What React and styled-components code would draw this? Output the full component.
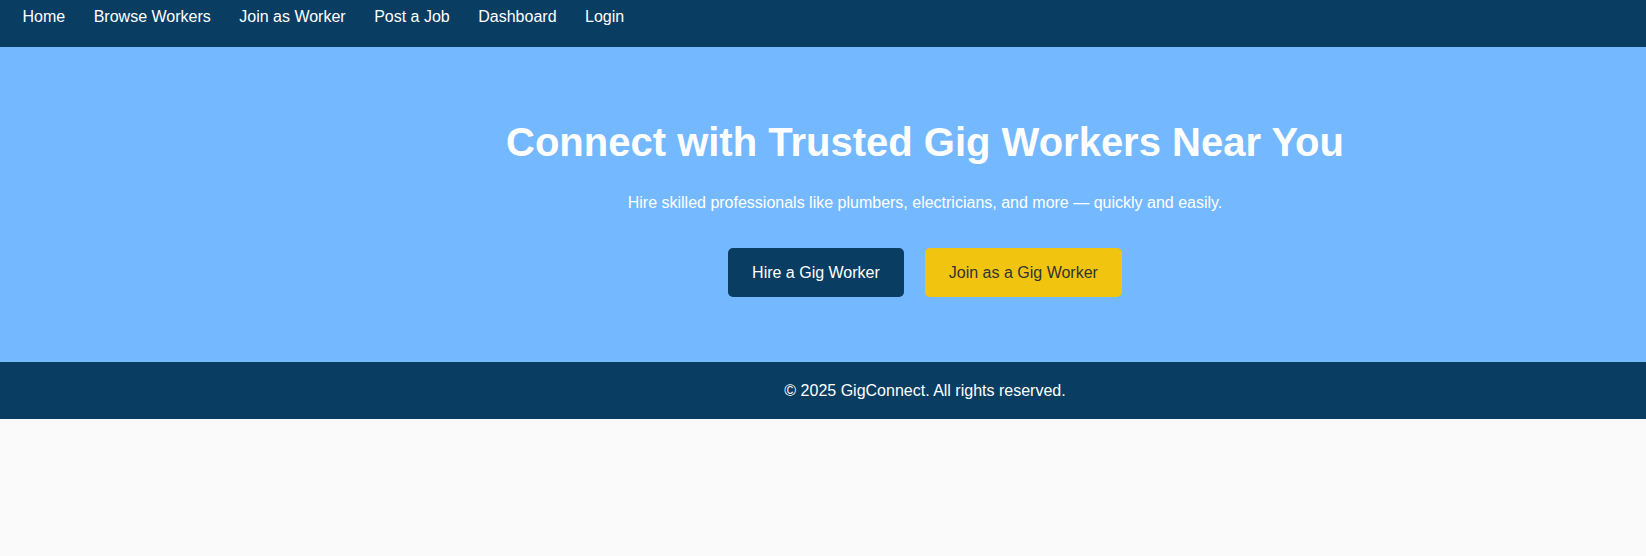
import styled, { createGlobalStyle } from "styled-components";

const GlobalStyle = createGlobalStyle`
  * {
    box-sizing: border-box;
  }
  body {
    margin: 0;
    background: #fafafa;
    font-family: "Liberation Sans", Arial, sans-serif;
  }
`;

const links = ["Home", "Browse Workers", "Join as Worker", "Post a Job", "Dashboard", "Login"];

const App = () => {
  return (
    <>
      <GlobalStyle />
      <Nav>
        {links.map((label) => (
          <NavLink key={label} href="#">
            {label}
          </NavLink>
        ))}
      </Nav>
      <Hero>
        <Title>Connect with Trusted Gig Workers Near You</Title>
        <Subtitle>
          Hire skilled professionals like plumbers, electricians, and more — quickly and easily.
        </Subtitle>
        <Actions>
          <Button>Hire a Gig Worker</Button>
          <Button $variant="secondary">Join as a Gig Worker</Button>
        </Actions>
      </Hero>
      <Footer>© 2025 GigConnect. All rights reserved.</Footer>
    </>
  );
};

export default App;

const Nav = styled.nav`
  display: flex;
  align-items: flex-start;
  gap: 28.5px;
  height: 47px;
  padding: 8px 22.5px 0;
  background: #0a3d62;
`;

const NavLink = styled.a`
  color: #fff;
  text-decoration: none;
  font-size: 16px;
  line-height: 18px;
`;

const Hero = styled.section`
  display: flex;
  flex-direction: column;
  align-items: center;
  padding: 72px 0 65px 204px;
  background: #74b9ff;
  color: #fff;
  text-align: center;
`;

const Title = styled.h1`
  margin: 0 0 29px;
  font-size: 40px;
  line-height: 46px;
  font-weight: 700;
`;

const Subtitle = styled.p`
  margin: 0 0 36px;
  font-size: 16px;
  line-height: 18px;
`;

const Actions = styled.div`
  display: flex;
  gap: 21px;
`;

const Button = styled.button`
  padding: 15px 24px;
  border: none;
  border-radius: 5px;
  font-family: inherit;
  font-size: 16px;
  line-height: 19.4px;
  cursor: pointer;
  background: ${(p) => (p.$variant === "secondary" ? "#f1c40f" : "#0a3d62")};
  color: ${(p) => (p.$variant === "secondary" ? "#333" : "#fff")};
`;

const Footer = styled.footer`
  padding: 19.5px 0 19.5px 204px;
  background: #0a3d62;
  color: #fff;
  font-size: 16px;
  line-height: 18px;
  text-align: center;
`;
